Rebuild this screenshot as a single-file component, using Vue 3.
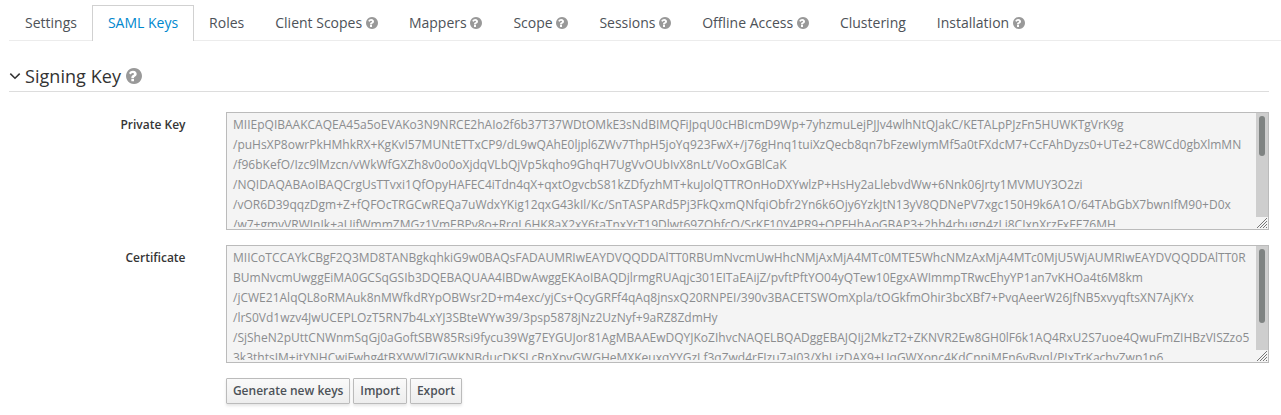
<script setup>
const tabs = [
  { label: 'Settings' },
  { label: 'SAML Keys', active: true },
  { label: 'Roles' },
  { label: 'Client Scopes', help: true },
  { label: 'Mappers', help: true },
  { label: 'Scope', help: true },
  { label: 'Sessions', help: true },
  { label: 'Offline Access', help: true },
  { label: 'Clustering' },
  { label: 'Installation', help: true },
]

const fields = [
  {
    label: 'Private Key',
    thumb: 40,
    lines: [
      'MIIEpQIBAAKCAQEA45a5oEVAKo3N9NRCE2hAIo2f6b37T37WDtOMkE3sNdBIMQFiJpqU0cHBIcmD9Wp+7yhzmuLejPJJv4wlhNtQJakC/KETALpPJzFn5HUWKTgVrK9g',
      '/puHsXP8owrPkHMhkRX+KgKvI57MUNtETTxCP9/dL9wQAhE0ljpl6ZWv7ThpH5joYq923FwX+/j76gHnq1tuiXzQecb8qn7bFzewIymMf5a0tFXdcM7+CcFAhDyzs0+UTe2+C8WCd0gbXlmMN',
      '/f96bKefO/Izc9lMzcn/vWkWfGXZh8v0o0oXjdqVLbQjVp5kqho9GhqH7UgVvOUbIvX8nLt/VoOxGBlCaK',
      '/NQIDAQABAoIBAQCrgUsTTvxi1QfOpyHAFEC4iTdn4qX+qxtOgvcbS81kZDfyzhMT+kuJolQTTROnHoDXYwlzP+HsHy2aLlebvdWw+6Nnk06Jrty1MVMUY3O2zi',
      '/vOR6D39qqzDgm+Z+fQFOcTRGCwREQa7uWdxYKig12qxG43kIl/Kc/SnTASPARd5Pj3FkQxmQNfqiObfr2Yn6k6Ojy6YzkJtN13yV8QDNePV7xgc150H9k6A1O/64TAbGbX7bwnIfM90+D0x',
      '/w7+gmvVRWInIk+aUifWmmZMGz1VmEBPv8o+RrqL6HK8aX2xY6taTnxYrT19Dlwt69ZQhfcO/SrKF10Y4PR9+OPFHhAoGBAP3+2hh4rhugn4zLi8CIxnXrzFxEE76MH',
    ],
  },
  {
    label: 'Certificate',
    thumb: 74,
    lines: [
      'MIICoTCCAYkCBgF2Q3MD8TANBgkqhkiG9w0BAQsFADAUMRIwEAYDVQQDDAlTT0RBUmNvcmUwHhcNMjAxMjA4MTc0MTE5WhcNMzAxMjA4MTc0MjU5WjAUMRIwEAYDVQQDDAlTT0R',
      'BUmNvcmUwggEiMA0GCSqGSIb3DQEBAQUAA4IBDwAwggEKAoIBAQDjlrmgRUAqjc301EITaEAijZ/pvftPftYO04yQTew10EgxAWImmpTRwcEhyYP1an7vKHOa4t6M8km',
      '/jCWE21AlqQL8oRMAuk8nMWfkdRYpOBWsr2D+m4exc/yjCs+QcyGRFf4qAq8jnsxQ20RNPEI/390v3BACETSWOmXpla/tOGkfmOhir3bcXBf7+PvqAeerW26JfNB5xvyqftsXN7AjKYx',
      '/lrS0Vd1wzv4JwUCEPLOzT5RN7b4LxYJ3SBteWYw39/3psp5878jNz2UzNyf+9aRZ8ZdmHy',
      '/SjSheN2pUttCNWnmSqGj0aGoftSBW85Rsi9fycu39Wg7EYGUJor81AgMBAAEwDQYJKoZIhvcNAQELBQADggEBAJQIj2MkzT2+ZKNVR2Ew8GH0lF6k1AQ4RxU2S7uoe4QwuFmZIHBzVISZzo5',
      '3k3thtsIM+itYNHCwiFwhg4tBXWWl7JGWKNBducDKSLcRnXpvGWGHeMXKeuxqYYGzLf3qZwd4rFIzu7aI03/XhLjzDAX9+UqGWXonc4KdCnpiMEn6vBvql/PIxTrKachvZwp1p6',
    ],
  },
]

const buttons = ['Generate new keys', 'Import', 'Export']

const helpPath =
  'M896 1376v-192q0-14-9-23t-23-9h-192q-14 0-23 9t-9 23v192q0 14 9 23t23 9h192q14 0 23-9t9-23zM1152 704q0-88-55.5-163t-138.5-116t-170-41q-243 0-371 213q-15 24 8 42l132 100q7 6 19 6q16 0 25-12q53-68 86-92q34-24 86-24q48 0 85.5 26t37.5 59q0 38-20 61t-68 45q-63 28-115.5 86.5t-52.5 125.5v36q0 14 9 23t23 9h192q14 0 23-9t9-23q0-19 21.5-49.5t54.5-49.5q32-18 49-28.5t46-35t44.5-48t28-60.5t12.5-81zM1664 896q0 209-103 385.5t-279.5 279.5t-385.5 103t-385.5-103t-279.5-279.5t-103-385.5t103-385.5t279.5-279.5t385.5-103t385.5 103t279.5 279.5t103 385.5z'
</script>

<template>
  <main class="page">
    <nav class="tabs">
      <a v-for="tab in tabs" :key="tab.label" class="tab" :class="{ active: tab.active }">
        <span>{{ tab.label }}</span>
        <svg v-if="tab.help" class="help" viewBox="128 128 1536 1536"><path :d="helpPath" /></svg>
      </a>
    </nav>

    <section class="section">
      <h2 class="legend">
        <svg class="chevron" viewBox="0 0 12 12"><path d="M1.3 3.6 6 8.3l4.7-4.7" /></svg>
        <span class="title">Signing Key</span>
        <svg class="help large" viewBox="128 128 1536 1536"><path :d="helpPath" /></svg>
      </h2>

      <div v-for="field in fields" :key="field.label" class="row">
        <label class="label">{{ field.label }}</label>
        <div class="area">
          <div class="content">
            <div v-for="line in field.lines" :key="line" class="line">{{ line }}</div>
          </div>
          <div class="side">
            <div class="track"><div class="thumb" :style="{ height: field.thumb + 'px' }"></div></div>
            <svg class="grip" viewBox="0 0 12 12">
              <path d="M1 11 11 1M4 11l7-7M7 11l4-4M10 11l1-1" />
            </svg>
          </div>
        </div>
      </div>

      <div class="actions">
        <button v-for="b in buttons" :key="b" class="btn">{{ b }}</button>
      </div>
    </section>
  </main>
</template>

<style>
body {
  background: #fff;
  overflow: hidden;
}
</style>

<style scoped>
.page {
  height: 415px;
  box-sizing: border-box;
  padding: 5px 0 0 9px;
  font-family: "Open Sans", sans-serif;
  font-size: 12px;
  line-height: 20px;
  color: #363636;
}
.tabs {
  display: flex;
  height: 35px;
  border-bottom: 1px solid #ececec;
}
.tab {
  display: flex;
  align-items: center;
  height: 34px;
  margin-right: -1px;
  padding: 0 15px;
  border: 1px solid transparent;
  border-bottom: 0;
  font-size: 14px;
  color: #4d5258;
  white-space: nowrap;
}
.tab.active {
  padding-bottom: 1px;
  border-color: #d1d1d1;
  background: #fff;
  color: #0088ce;
}
.tab.active span {
  margin-top: -1px;
}
.help {
  width: 12px;
  height: 12px;
  margin-left: 3.75px;
  fill: #999;
}
.legend {
  display: flex;
  align-items: center;
  width: 1260px;
  height: 29px;
  box-sizing: border-box;
  margin: 22px 0 20px;
  padding-bottom: 2px;
  border-bottom: 1px solid #ddd;
  font-size: 18px;
  font-weight: 400;
  color: #333;
}
.title {
  margin-top: -1px;
  letter-spacing: 0.05px;
}
.chevron {
  width: 12px;
  height: 12px;
  margin-right: 4px;
  fill: none;
  stroke: #333;
  stroke-width: 1.5;
}
.help.large {
  width: 16px;
  height: 16px;
  margin-left: 5px;
}
.row {
  display: flex;
  width: 1260px;
  margin-bottom: 15px;
}
.label {
  width: 176.5px;
  margin-right: 40.5px;
  padding-top: 3px;
  text-align: right;
  font-weight: 600;
}
.area {
  display: flex;
  flex: 1;
  min-width: 0;
  box-sizing: border-box;
  height: 118px;
  border: 1px solid #bbb;
  background: #f4f4f4;
  color: #8b8d8f;
}
.content {
  flex: 1;
  min-width: 0;
  height: 112px;
  padding: 2px 0 0 6px;
  overflow: hidden;
  letter-spacing: 0.007px;
}
.line {
  height: 20px;
  white-space: nowrap;
}
.side {
  display: flex;
  flex-direction: column;
  width: 12px;
}
.track {
  height: 104px;
  box-sizing: border-box;
  padding: 3px 3px 0;
  background: #cecece;
}
.thumb {
  border-radius: 3px;
  background: #7f8382;
}
.grip {
  width: 12px;
  height: 12px;
  fill: none;
  stroke: #777;
  stroke-width: 1;
}
.actions {
  display: flex;
  gap: 3px;
  padding-left: 217px;
}
.btn {
  box-sizing: border-box;
  height: 26px;
  padding: 0 5.9px;
  border: 1px solid #bbb;
  border-radius: 1px;
  background: linear-gradient(#fafafa, #ededed);
  box-shadow: 0 2px 3px rgba(3, 3, 3, 0.1);
  font: 600 12px/20px "Open Sans", sans-serif;
  color: #4d5258;
}
</style>
